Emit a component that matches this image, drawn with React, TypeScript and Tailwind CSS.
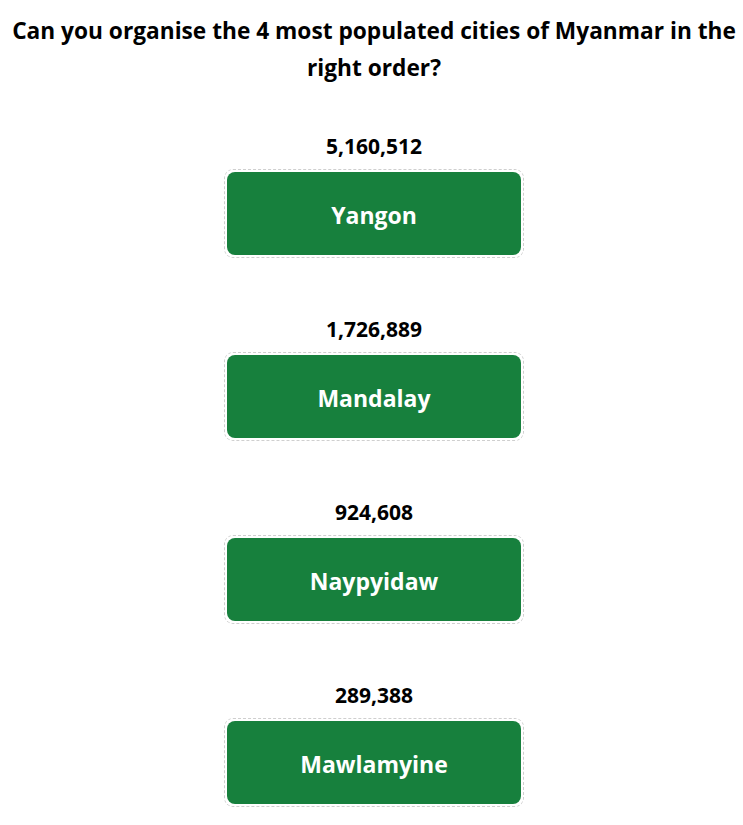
const cities = [
  { name: 'Yangon', population: '5,160,512' },
  { name: 'Mandalay', population: '1,726,889' },
  { name: 'Naypyidaw', population: '924,608' },
  { name: 'Mawlamyine', population: '289,388' },
];

export default function App() {
  return (
    <div className="min-h-screen bg-white text-black pt-[12px] pl-[5px] text-center font-['Open_Sans','Noto_Sans',sans-serif]">
      <h1 className="text-[22.7px] font-bold leading-[37px] px-1">
        Can you organise the 4 most populated cities of Myanmar in the
        <br />
        right order?
      </h1>

      <div className="mt-[47px] flex flex-col items-center gap-[58px]">
        {cities.map((city) => (
          <div key={city.name} className="flex flex-col items-center">
            <div className="text-[21px] font-bold leading-[26px]">{city.population}</div>
            <div className="mt-[10px] w-[300px] p-[2px] border border-dashed border-[#cfcfcf] rounded-[9px]">
              <div className="h-[83px] pt-[3px] rounded-[8px] bg-[#17803d] flex items-center justify-center text-white text-[23px] font-bold">
                {city.name}
              </div>
            </div>
          </div>
        ))}
      </div>
    </div>
  );
}
